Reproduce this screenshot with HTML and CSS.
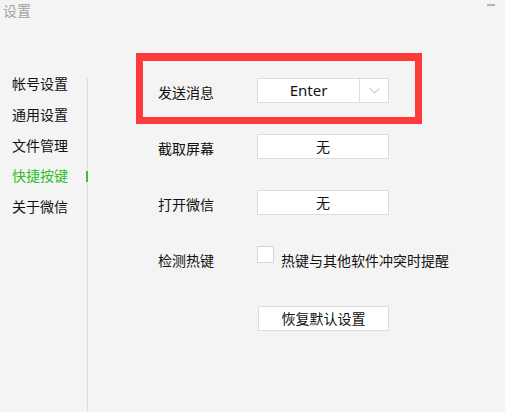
FILE: index.html
```html
<!DOCTYPE html>
<html lang="zh-CN">
<head>
<meta charset="utf-8">
<title>设置</title>
<link rel="stylesheet" href="styles.css">
</head>
<body>
<div class="window">
  <header class="titlebar">
    <span class="title">设置</span>
    <span class="minimize"></span>
  </header>
  <div class="main">
    <nav class="nav">
      <div class="nav-item">帐号设置</div>
      <div class="nav-item">通用设置</div>
      <div class="nav-item">文件管理</div>
      <div class="nav-item active">快捷按键</div>
      <div class="nav-item">关于微信</div>
    </nav>
    <div class="divider"><span class="indicator"></span></div>
    <section class="content">
      <div class="row highlighted">
        <span class="label">发送消息</span>
        <div class="field select">
          <span class="value">Enter</span>
          <span class="arrow">
            <svg width="11" height="6" viewBox="0 0 11 6"><path d="M0.5 0.5 L5.5 5 L10.5 0.5" fill="none" stroke="#cfcfcf" stroke-width="1.2"/></svg>
          </span>
        </div>
      </div>
      <div class="row">
        <span class="label">截取屏幕</span>
        <div class="field"><span class="value">无</span></div>
      </div>
      <div class="row">
        <span class="label">打开微信</span>
        <div class="field"><span class="value">无</span></div>
      </div>
      <div class="row">
        <span class="label">检测热键</span>
        <span class="checkbox"></span>
        <span class="check-text">热键与其他软件冲突时提醒</span>
      </div>
      <div class="actions">
        <button class="btn">恢复默认设置</button>
      </div>
    </section>
  </div>
</div>
</body>
</html>
```

FILE: styles.css
```css
html, body {
  margin: 0;
  padding: 0;
  background: #f4f4f4;
}
body {
  font-family: "Noto Sans CJK SC", "Microsoft YaHei", sans-serif;
  font-size: 14px;
  color: #111;
  width: 505px;
  height: 412px;
  overflow: hidden;
}
.window {
  display: flex;
  flex-direction: column;
  height: 412px;
}
.titlebar {
  height: 20px;
  display: flex;
  align-items: flex-start;
  justify-content: space-between;
  padding: 0 10px 0 3px;
}
.title {
  color: #a2a2a2;
  font-size: 14px;
  line-height: 20px;
}
.minimize {
  width: 8px;
  height: 2px;
  background: #b4b4b4;
  margin-top: 4px;
}
.main {
  flex: 1;
  display: flex;
  margin-top: 48px;
}
.nav {
  width: 75px;
  padding-left: 12px;
}
.nav-item {
  height: 30.8px;
  line-height: 31px;
  white-space: nowrap;
}
.nav-item.active {
  color: #2dbf2d;
}
.divider {
  width: 1px;
  margin-top: 10px;
  background: #dedede;
  display: flex;
  flex-direction: column;
}
.indicator {
  width: 2px;
  height: 11px;
  margin-top: 93px;
  margin-left: -1px;
  background: #2ec52e;
}
.content {
  flex: 1;
  padding: 10px 0 0 70px;
  display: flex;
  flex-direction: column;
  gap: 31px;
}
.row {
  display: flex;
  align-items: center;
  height: 25px;
}
.highlighted {
  position: relative;
}
.highlighted::after {
  content: "";
  position: absolute;
  left: -22px;
  top: -25px;
  width: 286px;
  height: 71px;
  box-sizing: border-box;
  border: 7px solid #fd3b3b;
  border-top-width: 8px;
}
.label {
  width: 99px;
  line-height: 20px;
  padding-top: 2px;
}
.field {
  box-sizing: border-box;
  width: 132px;
  height: 25px;
  background: #fff;
  border: 1px solid #dcdcdc;
  display: flex;
  align-items: center;
  justify-content: center;
}
.field .value {
  line-height: 23px;
}
.select {
  justify-content: flex-start;
}
.select .value {
  width: 101px;
  text-align: center;
  border-right: 1px solid #dcdcdc;
  height: 23px;
  font-family: "Noto Sans", sans-serif;
  font-size: 15px;
}
.arrow {
  flex: 1;
  display: flex;
  align-items: center;
  justify-content: center;
  padding-top: 1px;
}
.checkbox {
  box-sizing: border-box;
  width: 17px;
  height: 17px;
  background: #fff;
  border: 1px solid #d6d6d6;
  margin-bottom: 8px;
}
.check-text {
  margin-left: 7px;
  padding-top: 2px;
}
.actions {
  padding-left: 100px;
  margin-top: 4px;
}
.btn {
  box-sizing: border-box;
  width: 131px;
  height: 25px;
  background: #fff;
  border: 1px solid #dcdcdc;
  font-family: inherit;
  font-size: 14px;
  color: #111;
  padding: 0;
  line-height: 23px;
}
```
